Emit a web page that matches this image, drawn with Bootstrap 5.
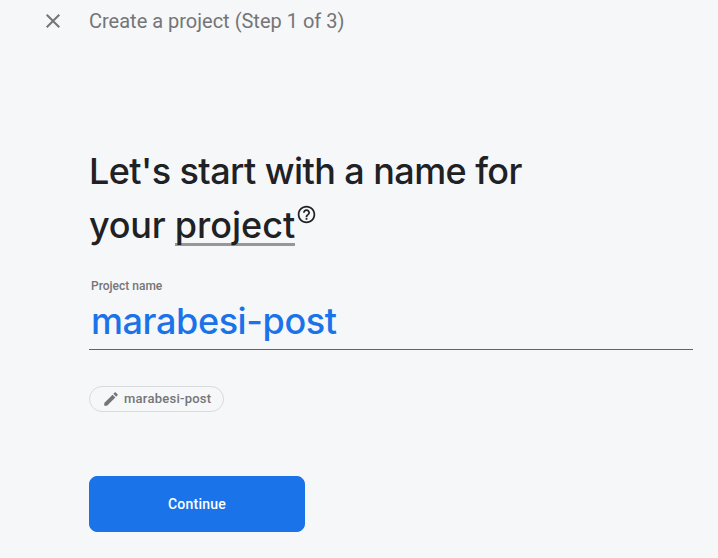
<!DOCTYPE html>
<html lang="en">
<head>
<meta charset="utf-8">
<meta name="viewport" content="width=device-width, initial-scale=1">
<title>Create a project</title>
<link href="https://cdn.jsdelivr.net/npm/bootstrap@5.3.0/dist/css/bootstrap.min.css" rel="stylesheet">
<style>
body { background: #f6f7f9; color: #202124; font-family: Roboto, sans-serif; height: 558px; overflow: hidden; }
.topbar { height: 42px; padding-left: 41px; gap: 24px; color: #747577; }
.topbar h1 { font-size: 20px; line-height: 24px; font-weight: 400; letter-spacing: 0; }
.wizard { padding: 102px 25px 0 89px; }
.headline { font: 500 36px/54px "Inter", sans-serif; letter-spacing: -.57px; white-space: nowrap; }
.second-line { letter-spacing: -.23px; }
.term { letter-spacing: 0; border-bottom: 3px solid #96979a; display: inline-block; line-height: 35px; }
.help { vertical-align: 13px; margin-left: 1px; }
.name-label { font-size: 12px; line-height: 16px; font-weight: 500; color: #747577; padding-left: 2px; margin-top: 26px; }
.name-line { height: 56px; border-bottom: 1px solid #1a73d8; }
.name-input { font: 500 36px/48px "Inter", sans-serif; letter-spacing: -.4px; color: #1a73e8; height: 54px; padding: 0 0 0 2px; }
.name-input:focus { color: #1a73e8; }
.id-chip { width: 135px; height: 26px; margin-top: 36px; border: 1px solid #d8dadd; color: #747577; font-size: 13px; line-height: 16px; font-weight: 500; letter-spacing: .25px; padding-left: 12px; gap: 4px; }
.btn-continue { --bs-btn-bg: #1a73e8; --bs-btn-border-color: #1a73e8; --bs-btn-color: #fff; width: 216px; height: 56px; margin-top: 64px; border-radius: 8px; font-size: 14px; font-weight: 500; letter-spacing: .25px; }
</style>
<script src="https://cdn.jsdelivr.net/npm/bootstrap@5.3.0/dist/js/bootstrap.bundle.min.js"></script>
</head>
<body>
<header class="topbar d-flex align-items-center">
  <svg width="24" height="24" viewBox="0 0 24 24" fill="currentColor" aria-hidden="true"><path d="M19 6.41 17.59 5 12 10.59 6.41 5 5 6.41 10.59 12 5 17.59 6.41 19 12 13.41 17.59 19 19 17.59 13.41 12z"/></svg>
  <h1 class="mb-0">Create a project (Step 1 of 3)</h1>
</header>
<main class="wizard d-flex flex-column align-items-start">
  <h2 class="headline mb-0">Let's start with a name for<br><span class="second-line">your <span class="term">project</span></span><svg class="help" width="21" height="21" viewBox="0 0 24 24" fill="currentColor" aria-hidden="true"><path d="M11 18h2v-2h-2v2zm1-16C6.48 2 2 6.48 2 12s4.480 10 10 10 10-4.480 10-10S17.520 2 12 2zm0 18c-4.410 0-8-3.590-8-8s3.590-8 8-8 8 3.590 8 8-3.590 8-8 8zm0-14c-2.210 0-4 1.790-4 4h2c0-1.100.9-2 2-2s2 .9 2 2c0 2-3 1.750-3 5h2c0-2.250 3-2.500 3-5 0-2.210-1.790-4-4-4z"/></svg></h2>
  <label class="name-label" for="name">Project name</label>
  <div class="name-line w-100"><input id="name" class="name-input form-control bg-transparent border-0 rounded-0 shadow-none" value="marabesi-post"></div>
  <div class="id-chip d-flex align-items-center rounded-pill">
    <svg width="18" height="18" viewBox="0 0 24 24" fill="currentColor" aria-hidden="true"><path d="M3 17.250V21h3.750L17.810 9.940l-3.750-3.750L3 17.250zM20.710 7.040a1 1 0 0 0 0-1.410l-2.340-2.340a1 1 0 0 0-1.410 0l-1.830 1.830 3.750 3.750 1.830-1.830z"/></svg>
    <span>marabesi-post</span>
  </div>
  <button type="button" class="btn btn-continue">Continue</button>
</main>
</body>
</html>
